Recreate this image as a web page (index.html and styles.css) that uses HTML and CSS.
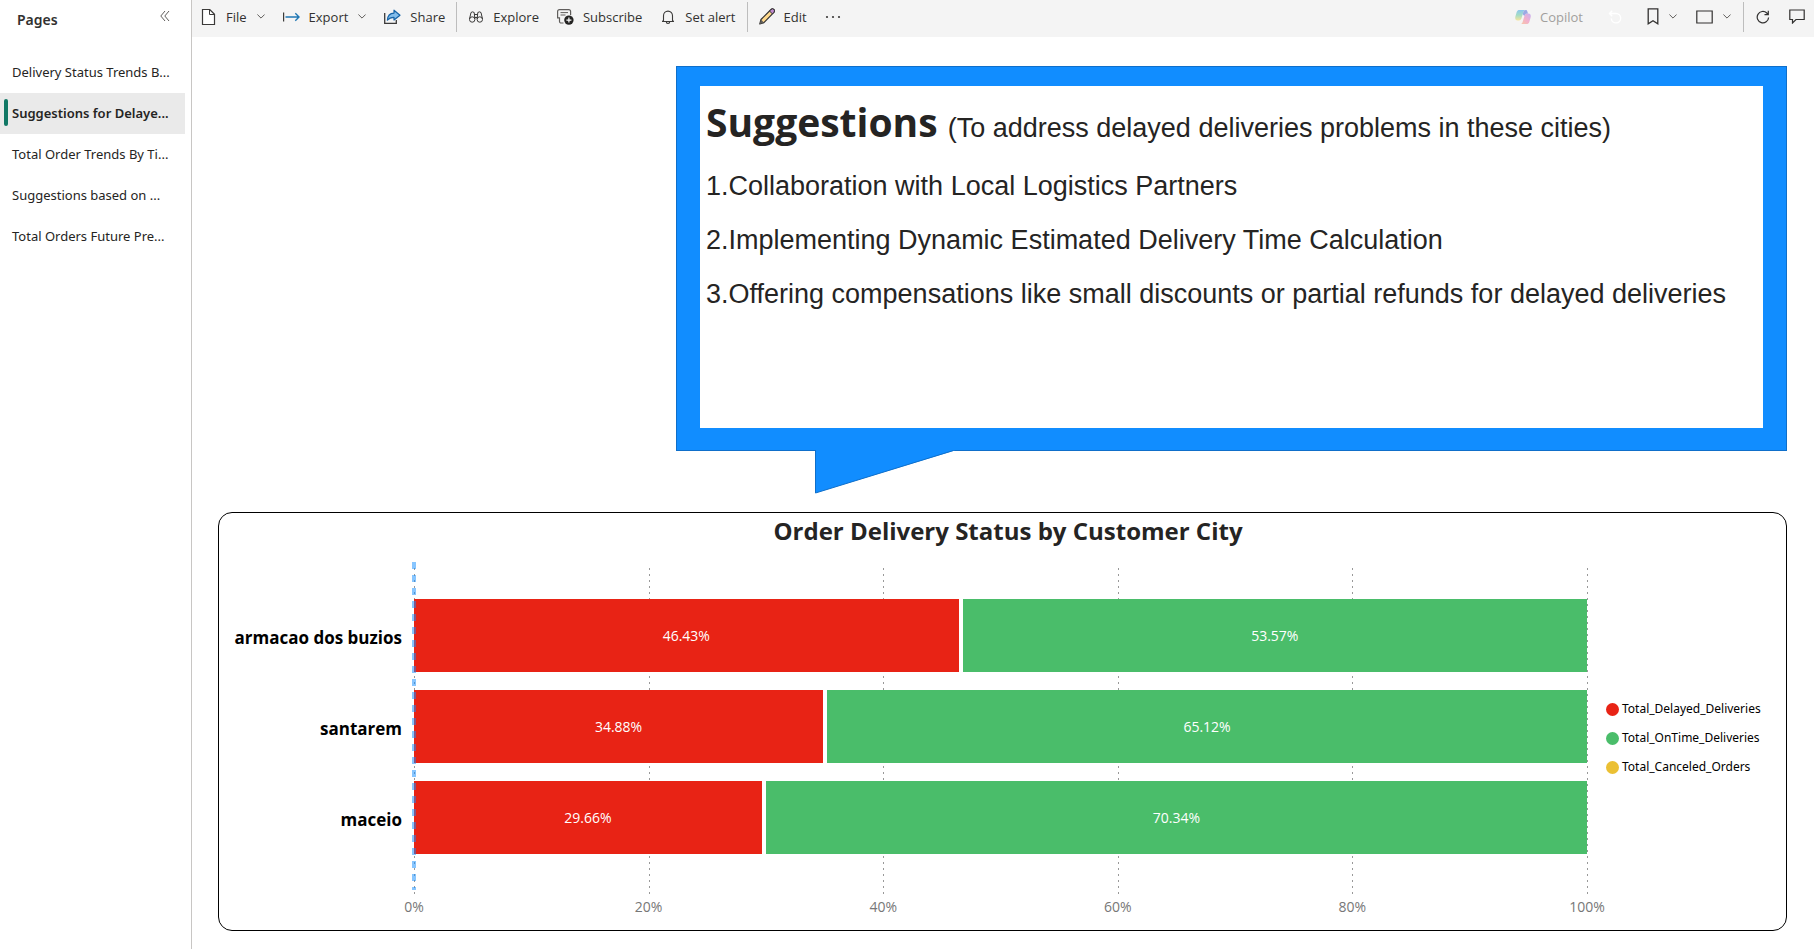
FILE: index.html
```html
<!DOCTYPE html>
<html lang="en">
<head>
<meta charset="utf-8">
<title>Suggestions for Delayed Deliveries</title>
<link rel="stylesheet" href="styles.css">
</head>
<body>
<div class="app">
  <nav class="pages" aria-label="Pages">
    <header class="pages-head">
      <h2 class="pages-title">Pages</h2>
      <button class="collapse" aria-label="Collapse pages pane">
        <svg width="10" height="12" viewBox="0 0 10 12" fill="none" stroke="#605e5c"><path d="M5 1 .8 6 5 11M9 1 4.8 6 9 11"/></svg>
      </button>
    </header>
    <ul class="page-list">
      <li><a class="page-link" href="#">Delivery Status Trends B...</a></li>
      <li><a class="page-link active" href="#" aria-current="page">Suggestions for Delaye...</a></li>
      <li><a class="page-link" href="#">Total Order Trends By Ti...</a></li>
      <li><a class="page-link" href="#">Suggestions based on ...</a></li>
      <li><a class="page-link" href="#">Total Orders Future Pre...</a></li>
    </ul>
  </nav>

  <div class="content">
    <div class="toolbar">
      <button class="tool">
        <svg width="16" height="16" viewBox="0 0 16 16" fill="none"><path d="M1.5.5h7.2l4.8 4.8v10.2h-12z" fill="#fff" stroke="#3b3a39" stroke-width="1.2"/><path d="M8.5.5v5h5" stroke="#3b3a39"/></svg>
        File
        <svg class="chev" width="8" height="5" viewBox="0 0 8 5" fill="none" stroke="#605e5c"><path d="M.4.5 4 4.1 7.6.5"/></svg>
      </button>
      <button class="tool">
        <svg width="17" height="16" viewBox="0 0 17 16" fill="none"><path d="M.6 3.5v9" stroke="#3b3a39" stroke-width="1.2"/><path d="M2.5 8h13.5M12.3 4.3 16 8l-3.7 3.7" stroke="#1f77b4" stroke-width="1.4"/></svg>
        Export
        <svg class="chev" width="8" height="5" viewBox="0 0 8 5" fill="none" stroke="#605e5c"><path d="M.4.5 4 4.1 7.6.5"/></svg>
      </button>
      <button class="tool">
        <svg width="17" height="16" viewBox="0 0 17 16" fill="none"><path d="M.7 4v10.3h11.6V11" stroke="#3b3a39" stroke-width="1.3"/><path d="M3.4 11.2C3.6 6.8 6 4.3 10 4.1V1.2l6 5-6 4.8V8.3C7 8.2 5 9.2 3.4 11.2z" fill="#83beec" stroke="#1664a7" stroke-width="1.2" stroke-linejoin="round"/></svg>
        Share
      </button>
      <span class="sep"></span>
      <button class="tool">
        <svg width="16" height="16" viewBox="0 0 16 16" fill="none" stroke="#3b3a39"><circle cx="4.2" cy="10.5" r="2.7"/><circle cx="11.8" cy="10.5" r="2.7"/><path d="M1.5 10 3 3.5Q4.5 2.2 6.2 3.5L6.9 10M14.5 10 13 3.5Q11.500 2.2 9.8 3.5L9.1 10M6.4 5.5h3.2M6.8 8.5h2.4"/></svg>
        Explore
      </button>
      <button class="tool">
        <svg width="17" height="16" viewBox="0 0 17 16" fill="none"><path d="M6.5 14H4.2C3.2 14 2.5 13.5 2.5 12.3V8.800H.6V2.500C.6 1.200 1.300.6 2.500.6h9.200c1.200 0 1.900.7 1.900 1.900V6" stroke="#605e5c" stroke-width="1.200"/><path d="M3.500 3.600h7.500M3.500 6h5" stroke="#605e5c"/><circle cx="11.900" cy="11.100" r="4.700" fill="#252423"/><path d="M11.900 8.600v5M9.400 11.100h5" stroke="#fff" stroke-width="1.200"/></svg>
        Subscribe
      </button>
      <button class="tool">
        <svg width="16" height="16" viewBox="0 0 16 16" fill="none" stroke="#3b3a39" stroke-width="1.100"><path d="M3.500 11.500V6.800a4.500 4.700 0 0 1 9 0v4.700l1 1H2.500zM6.300 12.800a1.700 1.700 0 0 0 3.400 0" stroke-linejoin="round"/></svg>
        Set alert
      </button>
      <span class="sep"></span>
      <button class="tool">
        <svg width="16" height="17" viewBox="0 0 16 17" fill="none"><path d="M.8 16 2 11.500 12 1.500a1.900 1.900 0 0 1 2.900 2.800L4.900 14.600z" fill="#ffd98c" stroke="#323130" stroke-width="1.200" stroke-linejoin="round"/><path d="m10.500 3 2.900 2.900 1.500-1.600a1.900 1.900 0 0 0-2.900-2.800z" fill="#c08ad0" stroke="#323130"/><path d="M.8 16 2 11.500l2.900 3.100z" fill="#605e5c"/></svg>
        Edit
      </button>
      <button class="tool" aria-label="More options">
        <svg width="16" height="4" viewBox="0 0 16 4" fill="#3b3a39"><circle cx="2" cy="2" r="1.100"/><circle cx="8" cy="2" r="1.100"/><circle cx="14" cy="2" r="1.100"/></svg>
      </button>

      <div class="tools-end">
        <button class="tool copilot" disabled>
          <svg width="16" height="16" viewBox="0 0 16 16">
            <defs>
              <linearGradient id="cpA" x1="0" y1="0" x2="0" y2="1"><stop offset="0" stop-color="#8cc6ee"/><stop offset=".5" stop-color="#a5dcc4"/><stop offset="1" stop-color="#f5e59f"/></linearGradient>
              <linearGradient id="cpB" x1="1" y1="0" x2="0" y2="1"><stop offset="0" stop-color="#c7b1f2"/><stop offset=".5" stop-color="#f2b0cd"/><stop offset="1" stop-color="#f8c9a4"/></linearGradient>
            </defs>
            <path d="M4.600 1h6.200c-1.600 0-2.200 1.200-2.600 2.600L6.600 9c-.5 1.600-1.200 2.400-2.700 2.400H2.600C.4 11.400-.1 9.500.4 7.600l1.300-4.500C2.200 1.600 3 1 4.600 1z" fill="url(#cpA)"/>
            <path d="M11.400 15H5.200c1.600 0 2.200-1.200 2.600-2.600L9.400 7c.5-1.600 1.200-2.400 2.700-2.400h1.300c2.200 0 2.700 1.900 2.200 3.800l-1.300 4.500c-.5 1.500-1.300 2.100-2.900 2.100z" fill="url(#cpB)"/>
            <path d="M10.800 1c-1.600 0-2.200 1.200-2.600 2.600l-.5 1.700 1.700 1.700c.5-1.600 1.200-2.400 2.700-2.400h.9l-.5-1.600C12.100 1.500 11.800 1 10.800 1z" fill="#9aa9e4"/>
          </svg>
          Copilot
        </button>
        <button class="tool reset" disabled aria-label="Reset filters">
          <svg width="14" height="14" viewBox="0 0 14 14" fill="none" stroke="#fff" stroke-width="1.400"><path d="M1.500 3.500h6.500a4.700 4.700 0 1 1-4.700 5M4.200.8 1.500 3.500l2.700 2.700"/></svg>
        </button>
        <button class="tool" aria-label="Bookmarks">
          <svg width="12" height="17" viewBox="0 0 12 17" fill="none" stroke="#323130" stroke-width="1.300"><path d="M1.200.8h9.600v15L6 12.800l-4.800 3z"/></svg>
          <svg class="chev" width="8" height="5" viewBox="0 0 8 5" fill="none" stroke="#605e5c"><path d="M.4.5 4 4.100 7.600.5"/></svg>
        </button>
        <button class="tool" aria-label="View">
          <svg width="17" height="14" viewBox="0 0 17 14" fill="none" stroke="#323130" stroke-width="1.200"><path d="M.8 1h15.400v12H.8z"/></svg>
          <svg class="chev" width="8" height="5" viewBox="0 0 8 5" fill="none" stroke="#605e5c"><path d="M.4.5 4 4.100 7.600.5"/></svg>
        </button>
        <span class="sep"></span>
        <button class="tool" aria-label="Refresh">
          <svg width="14" height="14" viewBox="0 0 14 14" fill="none" stroke="#323130" stroke-width="1.200"><path d="M12.600 7.500A5.700 5.700 0 1 1 10.800 3L12 4.300M12.300.8v3.800H8.500"/></svg>
        </button>
        <button class="tool" aria-label="Comments">
          <svg width="16" height="15" viewBox="0 0 16 15" fill="none" stroke="#323130" stroke-width="1.200"><path d="M.8 1h14.400v9.500H7L3.500 14v-3.500H.8z"/></svg>
        </button>
      </div>
    </div>

    <main class="report">
      <section class="callout">
        <div class="callout-frame">
          <div class="callout-body">
            <p class="lead"><strong class="callout-title">Suggestions </strong>(To address delayed deliveries problems in these cities)</p>
            <p class="item">1.Collaboration with Local Logistics Partners</p>
            <p class="item">2.Implementing Dynamic Estimated Delivery Time Calculation</p>
            <p class="item">3.Offering compensations like small discounts or partial refunds for delayed deliveries</p>
          </div>
        </div>
        <svg class="tail" width="140" height="44" viewBox="0 0 140 44"><path d="M0 0H140L138 1 .5 43V0z" fill="#118dff"/><path d="M.5 0v43L138.500.5" fill="none" stroke="#0f6fca"/></svg>
      </section>

      <section class="card">
        <h1 class="card-title">Order Delivery Status by Customer City</h1>
        <div class="chart">
          <div class="cities">
            <span class="city">armacao dos buzios</span>
            <span class="city">santarem</span>
            <span class="city">maceio</span>
          </div>
          <div class="plot">
            <div class="grid"><i></i><i></i><i></i><i></i><i></i><i></i></div>
            <div class="bars">
              <div class="bar"><span class="seg delayed" style="width:46.43%">46.43%</span><span class="seg ontime">53.57%</span></div>
              <div class="bar"><span class="seg delayed" style="width:34.88%">34.88%</span><span class="seg ontime">65.12%</span></div>
              <div class="bar"><span class="seg delayed" style="width:29.66%">29.66%</span><span class="seg ontime">70.34%</span></div>
            </div>
            <div class="zero"></div>
          </div>
          <ul class="legend">
            <li><span class="dot red"></span>Total_Delayed_Deliveries</li>
            <li><span class="dot green"></span>Total_OnTime_Deliveries</li>
            <li><span class="dot yellow"></span>Total_Canceled_Orders</li>
          </ul>
          <div class="axis"><span>0%</span><span>20%</span><span>40%</span><span>60%</span><span>80%</span><span>100%</span></div>
        </div>
      </section>
    </main>
  </div>
</div>
</body>
</html>
```

FILE: styles.css
```css
* { box-sizing: border-box; }
body {
  margin: 0;
  background: #fff;
  color: #252423;
  font-family: "Open Sans", "Noto Sans", sans-serif;
  font-size: 13px;
}
ul { list-style: none; margin: 0; padding: 0; }
h1, h2, p { margin: 0; }
button { border: 0; background: none; font: inherit; color: inherit; }
svg { display: block; flex: none; }

.app { display: flex; min-height: 100vh; }

/* Pages pane */
.pages {
  width: 192px;
  flex: none;
  border-right: 1px solid #c8c6c4;
  font-family: "Noto Sans", "Open Sans", sans-serif;
}
.pages-head {
  display: flex;
  justify-content: space-between;
  align-items: flex-start;
  height: 52px;
  padding: 10px 21px 0 17px;
}
.pages-title { font-size: 14px; line-height: 20px; font-weight: 600; color: #323130; }
.collapse { padding: 0; }
.page-list { width: 185px; }
.page-link {
  display: block;
  position: relative;
  padding-left: 12px;
  line-height: 41px;
  color: #252423;
  text-decoration: none;
  white-space: nowrap;
}
.page-link.active { background: #eaeaea; font-weight: 600; }
.page-link.active::before {
  content: "";
  position: absolute;
  left: 4px;
  top: 6px;
  width: 4px;
  height: 27px;
  border-radius: 2px;
  background: #117865;
}

/* Toolbar */
.content { flex: 1; min-width: 0; display: flex; flex-direction: column; }
.toolbar {
  display: flex;
  align-items: center;
  height: 37px;
  padding: 0 0 4px;
  background: #f4f4f4;
  color: #323130;
}
.tool {
  display: flex;
  align-items: center;
  gap: 9px;
  padding: 0 9px;
  line-height: 20px;
  white-space: nowrap;
}
.chev { margin-left: 1px; }
.sep { width: 1px; height: 30px; margin: 0 2px; background: #bdbdbd; }
.tools-end { display: flex; align-items: center; gap: 1px; margin-left: auto; }
.copilot { color: #a19f9d; }
.reset { margin: 0 6px; }

/* Report canvas */
.report { flex: 1; display: flex; flex-direction: column; padding: 29px 27px 18px 26px; }
.callout { margin-left: 458px; }
.callout-frame {
  border: 1px solid #0f6fca;
  background: #118dff;
  padding: 19px 23px 22px 23px;
}
.callout-body {
  min-height: 342px;
  padding: 5px 6px;
  background: #fff;
  font-family: "Liberation Sans", Arial, sans-serif;
  font-size: 27px;
}
.lead { line-height: 61px; }
.item { line-height: 54px; }
.callout-title { font-family: "Open Sans", sans-serif; font-size: 39px; font-weight: 700; }
.tail { margin: -1px 0 0 139px; }

/* Chart card */
.card {
  flex: 1;
  margin-top: 18px;
  border: 1px solid #000;
  border-radius: 14px;
}
.card-title {
  padding-left: 11px;
  font-size: 24px;
  line-height: 36px;
  font-weight: 700;
  text-align: center;
}
.chart {
  display: grid;
  grid-template-columns: 183px 1fr 199px;
  padding-top: 13px;
}
.cities {
  display: grid;
  grid-auto-rows: 73px;
  row-gap: 18px;
  padding-top: 37px;
  text-align: right;
  color: #000;
  font-size: 17px;
  font-weight: 700;
  line-height: 77px;
}
.plot { display: grid; margin-left: 12px; height: 332px; }
.grid, .bars, .zero { grid-area: 1 / 1; }
.grid { display: flex; justify-content: space-between; padding-top: 6px; margin-right: -1px; }
.grid i {
  width: 1px;
  background: repeating-linear-gradient(#999 0 2px, transparent 2px 6px);
}
.bars { display: grid; grid-auto-rows: 73px; row-gap: 18px; padding-top: 37px; align-content: start; }
.bar { display: flex; gap: 4px; background: #fff; }
.seg {
  display: flex;
  align-items: center;
  justify-content: center;
  color: #fff;
  font-size: 14px;
}
.delayed { background: #e82315; }
.ontime { flex: 1; background: #4abd6a; }
.zero {
  width: 4px;
  margin: 0 0 4px -2px;
  background: repeating-linear-gradient(rgba(17, 141, 255, .5) 0 7px, transparent 7px 13px);
}
.legend {
  align-self: start;
  display: grid;
  row-gap: 9px;
  padding: 137px 0 0 19px;
  color: #000;
  font-family: "Noto Sans", "Open Sans", sans-serif;
  font-size: 12px;
  line-height: 20px;
}
.legend li { display: flex; align-items: center; gap: 3px; }
.dot { width: 13px; height: 13px; border-radius: 50%; }
.red { background: #e82315; }
.green { background: #4abd6a; }
.yellow { background: #ebc034; }
.axis {
  grid-column: 2;
  display: flex;
  justify-content: space-between;
  margin-left: 12px;
  color: #777;
  font-size: 14px;
  line-height: 26px;
}
.axis span { display: flex; justify-content: center; width: 0; }
```
